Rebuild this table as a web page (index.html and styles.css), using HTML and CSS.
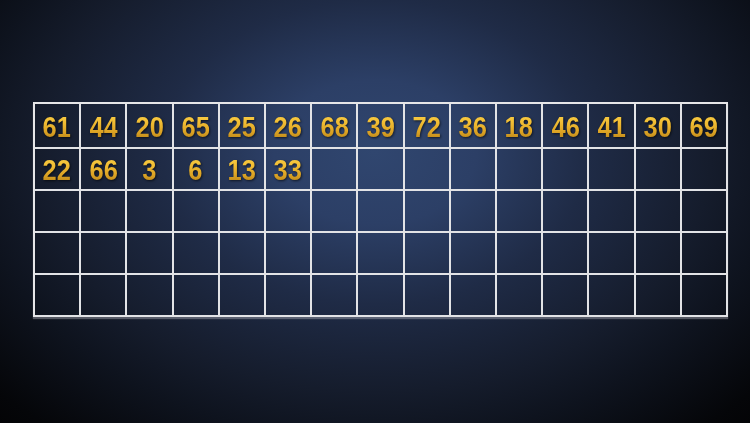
FILE: index.html
```html
<!DOCTYPE html>
<html>
<head>
<meta charset="utf-8">
<link rel="stylesheet" href="styles.css">
</head>
<body>
<main class="stage">
  <div class="board">
    <div class="cell"><span class="num">61</span></div>
    <div class="cell"><span class="num">44</span></div>
    <div class="cell"><span class="num">20</span></div>
    <div class="cell"><span class="num">65</span></div>
    <div class="cell"><span class="num">25</span></div>
    <div class="cell"><span class="num">26</span></div>
    <div class="cell"><span class="num">68</span></div>
    <div class="cell"><span class="num">39</span></div>
    <div class="cell"><span class="num">72</span></div>
    <div class="cell"><span class="num">36</span></div>
    <div class="cell"><span class="num">18</span></div>
    <div class="cell"><span class="num">46</span></div>
    <div class="cell"><span class="num">41</span></div>
    <div class="cell"><span class="num">30</span></div>
    <div class="cell"><span class="num">69</span></div>

    <div class="cell"><span class="num">22</span></div>
    <div class="cell"><span class="num">66</span></div>
    <div class="cell"><span class="num">3</span></div>
    <div class="cell"><span class="num">6</span></div>
    <div class="cell"><span class="num">13</span></div>
    <div class="cell"><span class="num">33</span></div>
    <div class="cell"></div><div class="cell"></div><div class="cell"></div>
    <div class="cell"></div><div class="cell"></div><div class="cell"></div>
    <div class="cell"></div><div class="cell"></div><div class="cell"></div>

    <div class="cell"></div><div class="cell"></div><div class="cell"></div>
    <div class="cell"></div><div class="cell"></div><div class="cell"></div>
    <div class="cell"></div><div class="cell"></div><div class="cell"></div>
    <div class="cell"></div><div class="cell"></div><div class="cell"></div>
    <div class="cell"></div><div class="cell"></div><div class="cell"></div>

    <div class="cell"></div><div class="cell"></div><div class="cell"></div>
    <div class="cell"></div><div class="cell"></div><div class="cell"></div>
    <div class="cell"></div><div class="cell"></div><div class="cell"></div>
    <div class="cell"></div><div class="cell"></div><div class="cell"></div>
    <div class="cell"></div><div class="cell"></div><div class="cell"></div>

    <div class="cell"></div><div class="cell"></div><div class="cell"></div>
    <div class="cell"></div><div class="cell"></div><div class="cell"></div>
    <div class="cell"></div><div class="cell"></div><div class="cell"></div>
    <div class="cell"></div><div class="cell"></div><div class="cell"></div>
    <div class="cell"></div><div class="cell"></div><div class="cell"></div>
  </div>
</main>
</body>
</html>
```

FILE: styles.css
```css
html, body {
  margin: 0;
  padding: 0;
}
body {
  width: 750px;
  height: 423px;
  overflow: hidden;
  background: radial-gradient(ellipse 560px 400px at 50% 36%, #30466f 0%, #2c3f66 18%, #1f2b46 38%, #151c2c 60%, #0e131e 72%, #050609 90%, #020203 100%);
  font-family: "Liberation Sans", Arial, sans-serif;
}
.stage {
  padding: 102px 0 0 33px;
}
.board {
  width: 695px;
  box-sizing: border-box;
  display: grid;
  grid-template-columns: repeat(15, 1fr);
  grid-template-rows: 45px 42px 42px 42px 42px;
  border-top: 2px solid #e6e6e8;
  border-left: 2px solid #e6e6e8;
  box-shadow: 0 2px 1px rgba(170, 170, 180, 0.45);
}
.cell {
  box-sizing: border-box;
  border-right: 2px solid #e2e3e6;
  border-bottom: 2px solid #e2e3e6;
  display: flex;
  align-items: center;
  justify-content: center;
}
.num {
  display: inline-block;
  font-weight: bold;
  font-size: 30px;
  line-height: 1;
  transform: scaleX(0.85);
  background: linear-gradient(180deg, #fcd650 0%, #f2be34 38%, #dca324 68%, #b27e16 100%);
  -webkit-background-clip: text;
  background-clip: text;
  color: transparent;
  -webkit-text-fill-color: transparent;
  filter: drop-shadow(1px 1px 1px rgba(0, 0, 0, 0.6));
  padding-top: 2px;
}
```
